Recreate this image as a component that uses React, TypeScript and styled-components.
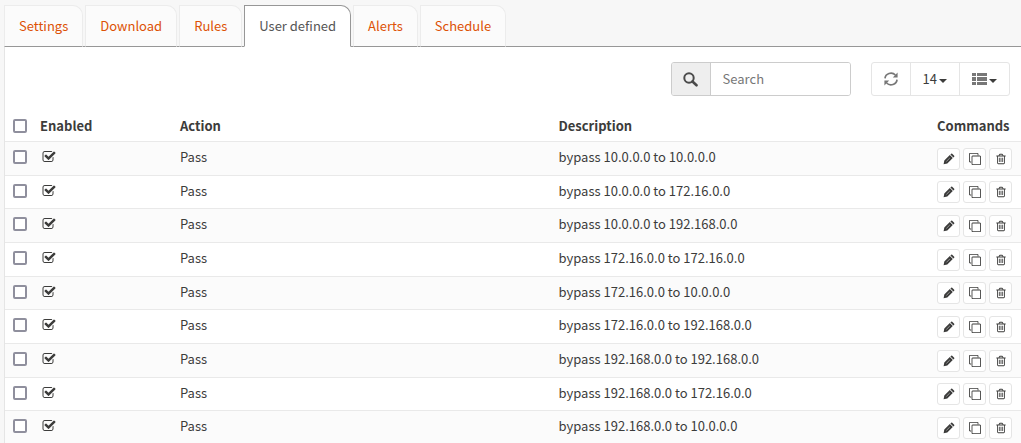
import React, { useState } from "react";
import styled, { createGlobalStyle, css } from "styled-components";

const GlobalStyle = createGlobalStyle`
  *, *::before, *::after { box-sizing: border-box; }
  body {
    margin: 0;
    background: #f7f7f7;
    color: #3c3c3b;
    font-family: "Noto Sans CJK SC", "Noto Sans", sans-serif;
    font-size: 13px;
    line-height: 20px;
  }
  button, input { font: inherit; color: inherit; }
`;

const Page = styled.main`
  padding: 5px 0 0 4px;
  min-height: 100vh;
  overflow: hidden;
  display: flex;
  flex-direction: column;
`;

const Tabs = styled.nav`
  display: flex;
  gap: 2px;
  border-bottom: 1px solid #979797;
`;

const Tab = styled.a<{ $active?: boolean }>`
  margin-bottom: -1px;
  padding: 10px 14px;
  border: 1px solid #ececec;
  border-bottom-color: #979797;
  border-top-right-radius: 10px;
  background: #fbfbfb;
  color: #dd5206;
  text-decoration: none;
  white-space: nowrap;
  ${(p) =>
    p.$active &&
    css`
      border-color: #979797;
      border-bottom-color: #fff;
      background: #fff;
      color: #555;
    `}
`;

const Panel = styled.section`
  flex: 1;
  background: #fff;
  border-left: 1px solid #e5e5e5;
`;

const Toolbar = styled.div`
  display: flex;
  justify-content: flex-end;
  gap: 20px;
  padding: 15px 11px 15px 0;
`;

const SearchGroup = styled.label`
  display: flex;
  width: 180px;
  height: 34px;
  border: 1px solid #ccc;
  border-radius: 3px;
  overflow: hidden;
`;

const SearchIconBox = styled.span`
  display: flex;
  align-items: center;
  justify-content: center;
  width: 39px;
  background: #eee;
  border-right: 1px solid #ccc;
`;

const SearchInput = styled.input`
  flex: 1;
  min-width: 0;
  padding: 0 12px;
  border: 0;
  outline: 0;
  background: #fff;
  &::placeholder { color: #777; opacity: 1; }
`;

const ButtonGroup = styled.div`
  display: flex;
  height: 34px;
  border: 1px solid #e5e5e5;
  border-radius: 3px;
`;

const ToolButton = styled.button`
  display: flex;
  align-items: center;
  gap: 2px;
  padding: 0 12px;
  border: 0;
  background: transparent;
  & + & { border-left: 1px solid #e5e5e5; }
`;

const Caret = styled.span`
  margin-top: 3px;
  border: 4px solid transparent;
  border-top-color: currentColor;
  border-bottom: 0;
`;

const Table = styled.table`
  width: 100%;
  table-layout: fixed;
  border-collapse: collapse;
`;

const HeadCell = styled.th<{ $width?: number }>`
  width: ${(p) => (p.$width ? `${p.$width}px` : "auto")};
  height: 30px;
  padding: 0 8px;
  text-align: left;
  font-weight: 700;
  white-space: nowrap;
`;

const Row = styled.tr`
  height: 34px;
  border-top: 1px solid #e9e9e9;
  &:nth-child(3n + 2) { height: 33px; }
  &:nth-child(odd) { background: #fbfbfb; }
`;

const Cell = styled.td`
  padding: 0 8px 2px;
  white-space: nowrap;
`;

const EnabledMark = styled.span`
  display: block;
  padding-left: 2px;
`;

const Check = styled.input`
  display: block;
  appearance: none;
  width: 14px;
  height: 14px;
  margin: 0;
  border: 2px solid #8f8f9d;
  border-radius: 2px;
  background: #fff;
  &:checked { background: #8f8f9d; }
`;

const Commands = styled.div`
  display: flex;
  gap: 3px;
  padding-top: 3px;
`;

const CommandButton = styled.button`
  display: flex;
  align-items: center;
  justify-content: center;
  width: 23px;
  height: 22px;
  padding: 0;
  border: 1px solid #e5e5e5;
  border-radius: 3px;
  background: #fff;
`;

const Glyph = styled.svg`
  display: block;
  flex: none;
  fill: currentColor;
`;

const FA = {
  check:
    "M1472 930v318q0 119-84.5 203.5t-203.5 84.5h-832q-119 0-203.5-84.5t-84.5-203.5v-832q0-119 84.5-203.5t203.5-84.5h832q63 0 117 25 15 7 18 23 3 17-9 29l-49 49q-10 10-23 10-3 0-9-2-23-6-45-6h-832q-66 0-113 47t-47 113v832q0 66 47 113t113 47h832q66 0 113-47t47-113v-254q0-13 9-22l64-64q10-10 23-10 6 0 12 3 20 8 20 29zm231-489l-814 814q-24 24-57 24t-57-24l-430-430q-24-24-24-57t24-57l110-110q24-24 57-24t57 24l263 263 647-647q24-24 57-24t57 24l110 110q24 24 24 57t-24 57z",
  clone:
    "M1664 1632v-1088q0-13-9.5-22.5t-22.5-9.5h-1088q-13 0-22.5 9.5t-9.5 22.5v1088q0 13 9.5 22.5t22.5 9.5h1088q13 0 22.5-9.5t9.5-22.5zm128-1088v1088q0 66-47 113t-113 47h-1088q-66 0-113-47t-47-113v-1088q0-66 47-113t113-47h1088q66 0 113 47t47 113zm-384-384v160h-128v-160q0-13-9.5-22.5t-22.5-9.5h-1088q-13 0-22.5 9.5t-9.5 22.5v1088q0 13 9.5 22.5t22.5 9.5h160v128h-160q-66 0-113-47t-47-113v-1088q0-66 47-113t113-47h1088q66 0 113 47t47 113z",
  trash:
    "M704 736v576q0 14-9 23t-23 9h-64q-14 0-23-9t-9-23v-576q0-14 9-23t23-9h64q14 0 23 9t9 23zm256 0v576q0 14-9 23t-23 9h-64q-14 0-23-9t-9-23v-576q0-14 9-23t23-9h64q14 0 23 9t9 23zm256 0v576q0 14-9 23t-23 9h-64q-14 0-23-9t-9-23v-576q0-14 9-23t23-9h64q14 0 23 9t9 23zm128 724v-948h-896v948q0 22 7 40.5t14.5 27 10.5 8.5h832q3 0 10.5-8.5t14.5-27 7-40.5zm-672-1076h448l-48-117q-7-9-17-11h-317q-10 2-17 11zm928 32v64q0 14-9 23t-23 9h-96v948q0 83-47 143.5t-113 60.5h-832q-66 0-113-58.5t-47-141.5v-952h-96q-14 0-23-9t-9-23v-64q0-14 9-23t23-9h309l70-167q15-37 54-63t79-26h320q40 0 79 26t54 63l70 167h309q14 0 23 9t9 23z",
};

const FaGlyph = ({ name, size = 12 }: { name: keyof typeof FA; size?: number }) => (
  <Glyph width={size} height={size} viewBox="0 0 1792 1792" aria-hidden>
    <path d={FA[name]} />
  </Glyph>
);

const PencilIcon = () => (
  <Glyph width="12" height="12" viewBox="0 0 12 12" aria-hidden>
    <path d="M.6 11.2l.7-3.6L6.8 2.1l3 3-5.5 5.5zM7.4 1.5l.8-.8q.5-.4 1 0l2 2q.4.5 0 1l-.8.8z" />
    <path d="M3.4 8.4l3.4-3.4" stroke="#aaa" strokeWidth=".8" />
  </Glyph>
);

const SearchIcon = () => (
  <Glyph width="15" height="15" viewBox="0 0 15 15" color="#4a4a4a" aria-hidden>
    <circle cx="6" cy="6" r="4.7" fill="none" stroke="currentColor" strokeWidth="2" />
    <path d="M9.5 9.5l4 3.8" stroke="currentColor" strokeWidth="2.6" strokeLinecap="round" />
  </Glyph>
);

const RefreshIcon = () => (
  <Glyph width="14" height="14" viewBox="0 0 14 14" color="#777" aria-hidden>
    <g fill="none" stroke="currentColor" strokeWidth="1.7">
      <path d="M1 6.4A6 5.6 0 0 1 11.4 3" />
      <path d="M13 7.6A6 5.6 0 0 1 2.6 11" />
    </g>
    <path d="M13.6.4v5.2H8.8zM.4 13.6V8.4h4.8z" />
  </Glyph>
);

const ListIcon = () => (
  <Glyph width="15" height="14" viewBox="0 0 15 14" color="#777" aria-hidden>
    <path d="M0 1h4v3H0zM5 1h10v3H5zM0 5h4v4H0zM5 5h10v4H5zM0 10h4v3H0zM5 10h10v3H5z" />
  </Glyph>
);

const TABS = ["Settings", "Download", "Rules", "User defined", "Alerts", "Schedule"];

const RULES = [
  ["10.0.0.0", "10.0.0.0"],
  ["10.0.0.0", "172.16.0.0"],
  ["10.0.0.0", "192.168.0.0"],
  ["172.16.0.0", "172.16.0.0"],
  ["172.16.0.0", "10.0.0.0"],
  ["172.16.0.0", "192.168.0.0"],
  ["192.168.0.0", "192.168.0.0"],
  ["192.168.0.0", "172.16.0.0"],
  ["192.168.0.0", "10.0.0.0"],
].map(([from, to]) => `bypass ${from} to ${to}`);

export default function App() {
  const [selected, setSelected] = useState<number[]>([]);
  const toggle = (i: number) =>
    setSelected((s) => (s.includes(i) ? s.filter((n) => n !== i) : [...s, i]));
  const all = selected.length === RULES.length;

  return (
    <Page>
      <GlobalStyle />
      <Tabs>
        {TABS.map((t) => (
          <Tab key={t} href="#" $active={t === "User defined"}>
            {t}
          </Tab>
        ))}
      </Tabs>
      <Panel>
        <Toolbar>
          <SearchGroup>
            <SearchIconBox>
              <SearchIcon />
            </SearchIconBox>
            <SearchInput type="text" placeholder="Search" aria-label="Search" />
          </SearchGroup>
          <ButtonGroup>
            <ToolButton type="button" aria-label="Refresh">
              <RefreshIcon />
            </ToolButton>
            <ToolButton type="button">
              14
              <Caret />
            </ToolButton>
            <ToolButton type="button" aria-label="Columns">
              <ListIcon />
              <Caret />
            </ToolButton>
          </ButtonGroup>
        </Toolbar>
        <Table>
          <thead>
            <tr>
              <HeadCell $width={27}>
                <Check
                  type="checkbox"
                  aria-label="Select all"
                  checked={all}
                  onChange={() => setSelected(all ? [] : RULES.map((_, i) => i))}
                />
              </HeadCell>
              <HeadCell $width={140}>Enabled</HeadCell>
              <HeadCell>Action</HeadCell>
              <HeadCell>Description</HeadCell>
              <HeadCell $width={92}>Commands</HeadCell>
            </tr>
          </thead>
          <tbody>
            {RULES.map((rule, i) => (
              <Row key={rule}>
                <Cell>
                  <Check
                    type="checkbox"
                    aria-label={`Select ${rule}`}
                    checked={selected.includes(i)}
                    onChange={() => toggle(i)}
                  />
                </Cell>
                <Cell>
                  <EnabledMark>
                    <FaGlyph name="check" size={14} />
                  </EnabledMark>
                </Cell>
                <Cell>Pass</Cell>
                <Cell>{rule}</Cell>
                <Cell>
                  <Commands>
                    <CommandButton type="button" aria-label="Edit">
                      <PencilIcon />
                    </CommandButton>
                    <CommandButton type="button" aria-label="Clone">
                      <FaGlyph name="clone" />
                    </CommandButton>
                    <CommandButton type="button" aria-label="Delete">
                      <FaGlyph name="trash" />
                    </CommandButton>
                  </Commands>
                </Cell>
              </Row>
            ))}
          </tbody>
        </Table>
      </Panel>
    </Page>
  );
}
